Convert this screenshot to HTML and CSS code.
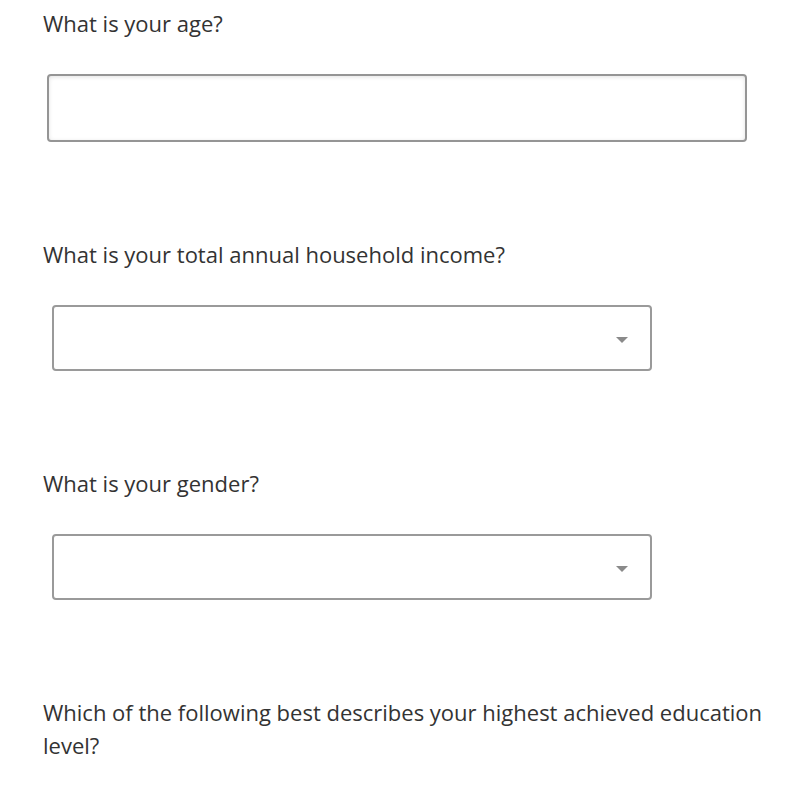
FILE: index.html
```html
<!DOCTYPE html>
<html lang="en">
<head>
<meta charset="utf-8">
<title>Survey</title>
<link rel="stylesheet" href="styles.css">
</head>
<body>
<form class="survey">
  <div class="question">
    <label class="label" for="age">What is your age?</label>
    <div class="text-wrap"><input id="age" class="text-input" type="text"></div>
  </div>
  <div class="question">
    <label class="label">What is your total annual household income?</label>
    <div class="select-wrap"><div class="select"><span class="arrow"></span></div></div>
  </div>
  <div class="question">
    <label class="label">What is your gender?</label>
    <div class="select-wrap"><div class="select"><span class="arrow"></span></div></div>
  </div>
  <div class="question">
    <label class="label">Which of the following best describes your highest achieved education level?</label>
  </div>
</form>
</body>
</html>
```
FILE: styles.css
```css
html, body {
  margin: 0;
  padding: 0;
  background: #fff;
}
body {
  font-family: "Open Sans", "Liberation Sans", sans-serif;
  color: #333;
}
.survey {
  padding: 7px 30px 0 43px;
}
.question {
  margin-bottom: 96px;
}
.question:last-child {
  margin-bottom: 0;
}
.label {
  display: block;
  font-size: 22px;
  line-height: 33px;
}
.text-wrap {
  padding: 34px 0 0 4px;
}
.text-input {
  display: block;
  box-sizing: border-box;
  width: 700px;
  height: 68px;
  margin: 0;
  border: 2px solid #959595;
  border-radius: 4px;
  box-shadow: inset 0 1px 4px rgba(0,0,0,0.12);
  background: #fff;
  outline: none;
}
.select-wrap {
  padding: 34px 0 0 9px;
}
.select {
  box-sizing: border-box;
  width: 600px;
  height: 66px;
  border: 2px solid #9a9a9a;
  border-radius: 4px;
  display: flex;
  align-items: center;
  justify-content: flex-end;
  padding-right: 22px;
}
.arrow {
  width: 0;
  height: 0;
  border-left: 6px solid transparent;
  border-right: 6px solid transparent;
  border-top: 6px solid #8a8a8a;
  margin-top: 3px;
}
```
